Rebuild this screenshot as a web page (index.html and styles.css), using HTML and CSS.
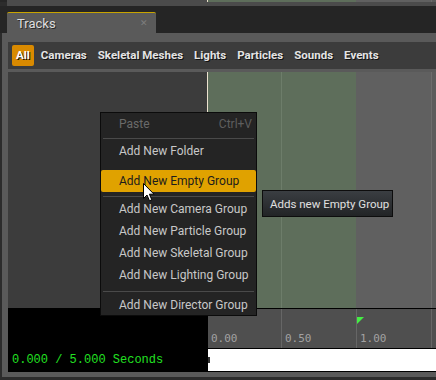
FILE: index.html
```html
<!DOCTYPE html>
<html lang="en">
<head>
    <meta charset="UTF-8">
    <title>Tracks</title>
    <link rel="stylesheet" href="styles.css">
</head>
<body>
    <div class="above">
        <div class="a-gray"></div>
        <div class="a-line"></div>
        <div class="a-green"></div>
        <div class="a-out"></div>
        <div class="a-tick"></div>
        <div class="a-rest"></div>
    </div>
    <div class="above-pad"></div>

    <div class="tabbar">
        <div class="tab">
            <span>Tracks</span>
            <span class="close">&#x2715;</span>
        </div>
    </div>

    <div class="panel">
        <div class="filters">
            <span class="filter on">All</span>
            <span class="filter">Cameras</span>
            <span class="filter">Skeletal Meshes</span>
            <span class="filter">Lights</span>
            <span class="filter">Particles</span>
            <span class="filter">Sounds</span>
            <span class="filter">Events</span>
        </div>

        <div class="content">
            <div class="outliner"></div>
            <div class="tracks">
                <div class="t-col in tick"></div>
                <div class="t-col in wide"></div>
                <div class="t-col out tick wider"></div>
                <div class="t-col out rest"></div>
            </div>

            <div class="clock">0.000 / 5.000 Seconds</div>
            <div class="ruler">
                <div class="r-col"><span class="label">0.00</span></div>
                <div class="r-col wide"><span class="label">0.50</span></div>
                <div class="r-col wide"><span class="marker"></span><span class="label">1.00</span></div>
                <div class="r-col rest"></div>
            </div>
            <div class="timebar"><span class="playhead"></span></div>
        </div>
    </div>

    <div class="menu">
        <div class="item disabled"><span>Paste</span><span class="key">Ctrl+V</span></div>
        <div class="sep"></div>
        <div class="item">Add New Folder</div>
        <div class="item active">Add New Empty Group</div>
        <div class="sep"></div>
        <div class="item">Add New Camera Group</div>
        <div class="item">Add New Particle Group</div>
        <div class="item">Add New Skeletal Group</div>
        <div class="item">Add New Lighting Group</div>
        <div class="sep last"></div>
        <div class="item">Add New Director Group</div>
    </div>

    <div class="tooltip">Adds new Empty Group</div>

    <svg class="cursor" width="12" height="19" viewBox="0 0 12 19">
        <path d="M0.5 0.5 L0.5 15.5 L4 12 L6.5 17.8 L8.8 16.8 L6.4 11.2 L11 11.2 Z" fill="#fff" stroke="#000" stroke-width="1"/>
    </svg>
</body>
</html>
```

FILE: styles.css
```css
body {
    margin: 0;
    width: 436px;
    height: 380px;
    overflow: hidden;
    position: relative;
    background: #2c2c2c;
    font-family: Roboto, 'Liberation Sans', sans-serif;
}

/* strip of the panel above */
.above {
    display: flex;
    height: 2px;
    padding-left: 7px;
    background: #262626;
}

.a-gray { width: 200px; background: #4b4b4b; }
.a-line { width: 1px; background: #e8dcc6; }
.a-green { width: 148px; background: #5e6e5b; }
.a-out { width: 75px; background: #606060; }
.a-tick { width: 1px; background: #6c6c6c; }
.a-rest { flex: 1; background: #5c5c5c; }

.above-pad {
    height: 4px;
    margin-left: 7px;
    background: #4b4b4b;
}

/* tab */
.tabbar {
    height: 27px;
    display: flex;
    align-items: flex-end;
    padding-left: 7px;
    box-sizing: border-box;
    background: #252525;
}

.tab {
    width: 149px;
    height: 21px;
    box-sizing: border-box;
    display: flex;
    align-items: center;
    justify-content: space-between;
    padding: 0 8px 0 10px;
    background: #5a5a5a;
    border-top: 1px solid #c8a400;
    border-radius: 2px 2px 0 0;
    color: #dedede;
    font-size: 13px;
    text-shadow: 1px 1px 0 #2a2a2a;
}

.tab .close {
    color: #7e7e7e;
    font-size: 9px;
    text-shadow: none;
}

/* panel */
.panel {
    margin-left: 2px;
    padding: 9px 0 5px 6px;
    background: #5a5a5a;
}

.filters {
    display: flex;
    align-items: center;
    gap: 3px;
    height: 27px;
    padding-left: 4px;
    background: #3c3c3c;
}

.filter {
    height: 21px;
    line-height: 21px;
    padding: 0 4px;
    border-radius: 2px;
    font-size: 11.5px;
    font-weight: bold;
    color: #e4e4e4;
    text-shadow: 1px 1px 0 #111;
}

.filter.on {
    background: #d98a00;
    color: #fff;
}

.content {
    margin-top: 3px;
    display: grid;
    grid-template-columns: 199px 1fr;
    grid-template-rows: 236px 40px 24px;
}

.outliner {
    background: #3c3c3c;
}

.tracks {
    display: flex;
    border-left: 1px solid #ece2cf;
}

.t-col { width: 73px; }
.t-col.wide { width: 74px; }
.t-col.wider { width: 75px; }
.t-col.rest { flex: 1; }
.t-col.in { background: #5e6e5b; }
.t-col.out { background: #606060; }
.t-col.in.tick { border-right: 1px solid #6d7d6a; }
.t-col.out.tick { border-right: 1px solid #6d6d6d; }
.t-col.out.rest { background: #5c5c5c; }

.clock {
    grid-row: 2 / 4;
    display: flex;
    align-items: flex-end;
    padding: 0 0 5px 4px;
    background: #000;
    color: #22e022;
    font-family: 'Liberation Mono', 'DejaVu Sans Mono', monospace;
    font-size: 12px;
}

.ruler {
    display: flex;
    overflow: hidden;
    background: #4f4f4f;
    border-top: 1px solid #000;
    border-left: 1px solid #000;
}

.r-col {
    width: 70px;
    flex-shrink: 0;
    display: flex;
    flex-direction: column;
    padding-left: 3px;
    border-right: 1px solid #666;
}

.r-col.wide { width: 71px; }
.r-col.rest { border-right: none; flex: 1; }

.label {
    margin-top: auto;
    margin-bottom: 3px;
    color: #a2a2a2;
    font-family: 'DejaVu Sans Mono', monospace;
    font-size: 11px;
}

.marker {
    margin: 8px 0 0 -3px;
    width: 0;
    height: 0;
    border-top: 7px solid #44ee44;
    border-right: 7px solid transparent;
}

.timebar {
    background: #fff;
    border-top: 1px solid #000;
    border-bottom: 1px solid #000;
    border-left: 1px solid #000;
    display: flex;
    align-items: center;
}

.playhead {
    width: 2px;
    height: 6px;
    background: #333;
}

/* context menu */
.menu {
    position: absolute;
    left: 100px;
    top: 112px;
    width: 157px;
    height: 204px;
    box-sizing: border-box;
    border: 1px solid #0b0b0b;
    background: #242424;
}

.item {
    height: 22px;
    display: flex;
    align-items: center;
    justify-content: space-between;
    padding: 0 4px 0 18px;
    font-size: 12px;
    color: #c8c8c8;
}

.item.disabled {
    height: 21px;
    color: #6a6a6a;
}

.item .key {
    color: #5e5e5e;
}

.item.active {
    margin-top: 8px;
    background: #e0a200;
    border-radius: 2px;
    color: #1c1c1c;
}

.sep {
    height: 1px;
    margin: 4px 2px 1px;
    background: #4a4a4a;
}

.sep.last {
    margin: 5px 2px 2px;
}

.tooltip {
    position: absolute;
    left: 262px;
    top: 190px;
    width: 131px;
    height: 27px;
    box-sizing: border-box;
    border: 1px solid #0d0d0d;
    padding-left: 7px;
    display: flex;
    align-items: center;
    white-space: nowrap;
    background: linear-gradient(#3a3e42, #222426);
    color: #e0e0e0;
    font-size: 11.5px;
}

.cursor {
    position: absolute;
    left: 143px;
    top: 183px;
}
```
